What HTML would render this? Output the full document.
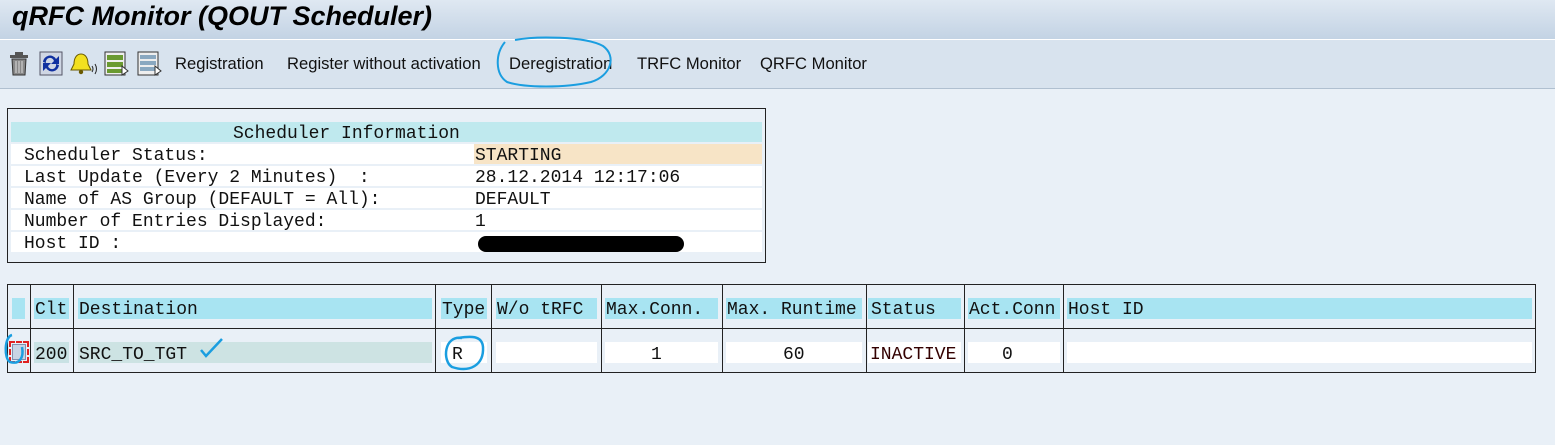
<!DOCTYPE html>
<html><head><meta charset="utf-8"><style>
*{margin:0;padding:0;box-sizing:border-box}
body{width:1555px;height:445px;background:#e9f0f7;position:relative;overflow:hidden;font-family:"Liberation Mono",monospace;font-size:18px;color:#111}
.a{position:absolute}
.t{position:absolute;white-space:pre;line-height:20px;margin-top:2px}
.hd{position:absolute;background:#a8e4f2;height:21px;top:298px}
.cl{position:absolute;background:#fff;height:21px;top:342px}
.vl{position:absolute;top:284px;height:88px;width:1px;background:#222}
.tb{position:absolute;top:54px;font-family:"Liberation Sans",sans-serif;font-size:16.6px;color:#111;white-space:pre}
</style></head><body>
<div class="a" style="left:0;top:0;width:1555px;height:39px;background:linear-gradient(#dfe8f2,#c3d3e4)"></div>
<div class="a" style="left:12px;top:1px;font-family:'Liberation Sans',sans-serif;font-weight:bold;font-style:italic;font-size:27px;color:#000;white-space:pre">qRFC Monitor (QOUT Scheduler)</div>
<div class="a" style="left:0;top:39px;width:1555px;height:1px;background:#fff"></div>
<div class="a" style="left:0;top:40px;width:1555px;height:48px;background:#d8e3ee"></div>
<div class="a" style="left:0;top:88px;width:1555px;height:1px;background:#b0c0d0"></div>
<svg class="a" style="left:8px;top:50px" width="160" height="28">
<g><rect x="2" y="5" width="18" height="3" fill="#555"/><rect x="7" y="2" width="8" height="4" fill="#555"/><path d="M4 9h14l-1 16H5z" fill="#888" stroke="#333"/><path d="M8 11v12M11 11v12M14 11v12" stroke="#ddd"/></g>
<g transform="translate(31,0)"><rect x="1" y="2" width="22" height="23" fill="#cfd6e4" stroke="#556"/><path d="M4 12a7 7 0 0 1 13-3l3-3v8h-8l3-3a4 4 0 0 0-8 2z M20 15a7 7 0 0 1-13 3l-3 3v-8h8l-3 3a4 4 0 0 0 8-2z" fill="#1030a0"/></g>
<g transform="translate(62,0)"><path d="M11 4c-5 0-7 5-7 10l-3 6h20l-3-6c0-5-2-10-7-10z" fill="#f2e020" stroke="#6a5a00"/><circle cx="11" cy="22" r="2.2" fill="#6a5a00"/><path d="M22 16q2 3 0 6M25 14q3 5 0 10" stroke="#222" fill="none"/></g>
<g transform="translate(96,0)"><rect x="1" y="2" width="20" height="23" fill="#eee" stroke="#333"/><rect x="3" y="5" width="16" height="5" fill="#6a9a30"/><rect x="3" y="12" width="16" height="5" fill="#6a9a30"/><rect x="3" y="19" width="16" height="4" fill="#6a9a30"/><path d="M18 16l6 5-6 4z" fill="#fff" stroke="#333"/></g>
<g transform="translate(129,0)"><rect x="1" y="2" width="20" height="23" fill="#eee" stroke="#333"/><rect x="3" y="5" width="16" height="4" fill="#8aa8c0"/><rect x="3" y="11" width="16" height="4" fill="#8aa8c0"/><rect x="3" y="17" width="16" height="4" fill="#8aa8c0"/><path d="M18 16l6 5-6 4z" fill="#fff" stroke="#333"/></g>
</svg>
<div class="tb" style="left:175px">Registration</div>
<div class="tb" style="left:287px">Register without activation</div>
<div class="tb" style="left:509px">Deregistration</div>
<div class="tb" style="left:637px">TRFC Monitor</div>
<div class="tb" style="left:760px">QRFC Monitor</div>
<svg class="a" style="left:495px;top:34px" width="125" height="56"><path d="M20 6C40 2 90 2 108 12 122 22 116 42 96 48 70 54 30 54 12 48 0 40 0 20 10 8" fill="none" stroke="#1a9ee0" stroke-width="2"/></svg>
<div class="a" style="left:7px;top:108px;width:759px;height:155px;border:1px solid #222"></div>
<div class="a" style="left:11px;top:122px;width:751px;height:20px;background:#bfe9ee"></div>
<div class="t" style="left:233px;top:122px">Scheduler Information</div>
<div class="a" style="left:11px;top:144px;width:751px;height:20px;background:#fff"></div>
<div class="a" style="left:474px;top:144px;width:288px;height:20px;background:#f7e4c6"></div>
<div class="a" style="left:11px;top:166px;width:751px;height:20px;background:#fff"></div>
<div class="a" style="left:11px;top:188px;width:751px;height:20px;background:#fff"></div>
<div class="a" style="left:11px;top:210px;width:751px;height:20px;background:#fff"></div>
<div class="a" style="left:11px;top:232px;width:751px;height:20px;background:#fff"></div>
<div class="t" style="left:24px;top:144px">Scheduler Status:</div>
<div class="t" style="left:24px;top:166px">Last Update (Every 2 Minutes)  :</div>
<div class="t" style="left:24px;top:188px">Name of AS Group (DEFAULT = All):</div>
<div class="t" style="left:24px;top:210px">Number of Entries Displayed:</div>
<div class="t" style="left:24px;top:232px">Host ID :</div>
<div class="t" style="left:475px;top:144px">STARTING</div>
<div class="t" style="left:475px;top:166px">28.12.2014 12:17:06</div>
<div class="t" style="left:475px;top:188px">DEFAULT</div>
<div class="t" style="left:475px;top:210px">1</div>
<div class="a" style="left:478px;top:236px;width:206px;height:16px;background:#000;border-radius:8px"></div>
<div class="a" style="left:7px;top:284px;width:1529px;height:89px;border:1px solid #222"></div>
<div class="a" style="left:7px;top:328px;width:1529px;height:1px;background:#222"></div>
<div class="vl" style="left:30px"></div><div class="vl" style="left:73px"></div><div class="vl" style="left:435px"></div><div class="vl" style="left:491px"></div><div class="vl" style="left:601px"></div><div class="vl" style="left:722px"></div><div class="vl" style="left:866px"></div><div class="vl" style="left:964px"></div><div class="vl" style="left:1063px"></div>
<div class="hd" style="left:12px;width:13px"></div>
<div class="hd" style="left:34px;width:35px"></div>
<div class="hd" style="left:78px;width:354px"></div>
<div class="hd" style="left:441px;width:46px"></div>
<div class="hd" style="left:496px;width:101px"></div>
<div class="hd" style="left:605px;width:113px"></div>
<div class="hd" style="left:726px;width:136px"></div>
<div class="hd" style="left:868px;width:93px"></div>
<div class="hd" style="left:968px;width:92px"></div>
<div class="hd" style="left:1067px;width:465px"></div>
<div class="t" style="left:35px;top:298px">Clt</div>
<div class="t" style="left:79px;top:298px">Destination</div>
<div class="t" style="left:442px;top:298px">Type</div>
<div class="t" style="left:497px;top:298px">W/o tRFC</div>
<div class="t" style="left:606px;top:298px">Max.Conn.</div>
<div class="t" style="left:727px;top:298px">Max. Runtime</div>
<div class="t" style="left:871px;top:298px">Status</div>
<div class="t" style="left:969px;top:298px">Act.Conn</div>
<div class="t" style="left:1068px;top:298px">Host ID</div>
<div class="cl" style="left:34px;width:35px;background:#c9e2e4"></div>
<div class="cl" style="left:78px;width:354px;background:#cde3e3"></div>
<div class="cl" style="left:441px;width:46px"></div>
<div class="cl" style="left:496px;width:101px"></div>
<div class="cl" style="left:605px;width:113px"></div>
<div class="cl" style="left:726px;width:136px"></div>
<div class="cl" style="left:868px;width:93px"></div>
<div class="cl" style="left:968px;width:92px"></div>
<div class="cl" style="left:1067px;width:465px"></div>
<div class="t" style="left:35px;top:343px">200</div>
<div class="t" style="left:79px;top:343px">SRC_TO_TGT</div>
<div class="t" style="left:452px;top:343px">R</div>
<div class="t" style="left:651px;top:343px">1</div>
<div class="t" style="left:783px;top:343px">60</div>
<div class="t" style="left:870px;top:343px;color:#300">INACTIVE</div>
<div class="t" style="left:1002px;top:343px">0</div>
<div class="a" style="left:9px;top:341px;width:20px;height:22px;border:2px dashed #e02020"></div>
<div class="a" style="left:12px;top:344px;width:14px;height:16px;background:#c8d4e4;border:1px solid #8090b0"></div>
<svg class="a" style="left:0;top:325px" width="500" height="50">
<path d="M12 10C4 12 4 34 10 37 20 40 24 32 22 22" fill="none" stroke="#1a9ee0" stroke-width="2.5"/>
<path d="M201 25l5 6 16-17" fill="none" stroke="#1a9ee0" stroke-width="2.5"/>
<path d="M462 13C444 10 442 36 452 42 470 48 484 40 483 22 482 10 470 11 458 13" fill="none" stroke="#1a9ee0" stroke-width="2.5"/>
</svg>
</body></html>
